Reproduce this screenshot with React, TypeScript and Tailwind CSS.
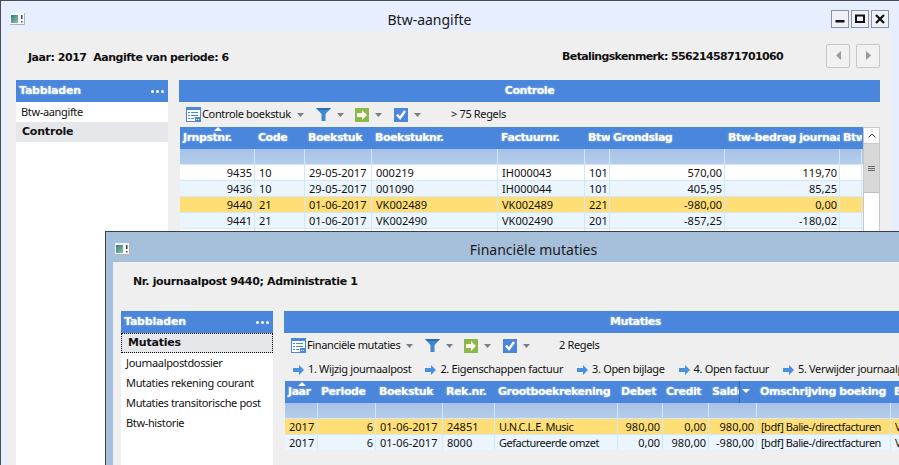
const font = "font-['Noto_Sans','DejaVu_Sans',sans-serif]";
const bold = "font-['DejaVu_Sans',sans-serif] font-bold text-[11px]";
const headShadow = "[text-shadow:0_0_2px_#b9d4f5]";

const WindowIcon = () => (
  <svg width="15" height="12" viewBox="0 0 15 12">
    <defs>
      <linearGradient id="winIcon" x1="0" y1="0" x2="1" y2="1">
        <stop offset="0" stopColor="#2f7d8a" />
        <stop offset="1" stopColor="#8fc0a8" />
      </linearGradient>
    </defs>
    <rect width="15" height="12" fill="#f7f7f7" />
    <path d="M14.500 0v11.500H0" fill="none" stroke="#b4b4b4" />
    <rect x="1" y="2" width="7" height="8" fill="url(#winIcon)" />
    <rect x="11" y="2" width="1.500" height="4" fill="#444" />
    <rect x="11" y="8" width="1.500" height="1.500" fill="#444" />
  </svg>
);

const TableIcon = () => (
  <svg width="15" height="15" viewBox="0 0 15 15" className="shrink-0">
    <rect x="0.5" y="0.5" width="14" height="14" fill="#fff" stroke="#4a86db" />
    <rect x="0" y="0" width="15" height="3" fill="#4a86db" />
    <path d="M2 5h2v1H2zM5 5h7v1H5zM2 8h2v1H2zM5 8h7v1H5zM2 11h2v1H2zM5 11h3v1H5z" fill="#4a86db" />
    <rect x="9" y="10" width="6" height="5" fill="#4a86db" />
    <path d="M10 12h1v1h-1zM12 12h1v1h-1z" fill="#fff" />
  </svg>
);

const Funnel = () => (
  <svg width="15" height="13" viewBox="0 0 15 13" className="shrink-0">
    <path d="M0 0h15L9.5 6v7h-4V6z" fill="#3f86d4" />
    <path d="M0 0h15l-2 2H2z" fill="#2a6cb5" />
  </svg>
);

const GreenArrow = () => (
  <svg width="14" height="14" viewBox="0 0 14 14" className="shrink-0">
    <rect width="14" height="14" fill="#8ab84a" />
    <path d="M2 5h5V2l5 5-5 5V9H2z" fill="#fdfbe6" />
  </svg>
);

const CheckBox = () => (
  <svg width="14" height="14" viewBox="0 0 14 14" className="shrink-0">
    <rect width="14" height="14" fill="#4a86db" />
    <path d="M3 6.500l3 3.500 5-7" fill="none" stroke="#fff" strokeWidth="2.400" />
  </svg>
);

const Caret = ({ className }: { className: string }) => (
  <svg width="7" height="4" viewBox="0 0 7 4" className={`shrink-0 ${className}`}>
    <path d="M0 0h7L3.500 4z" fill="#7a7f86" />
  </svg>
);

const BlueArrow = () => (
  <svg width="11" height="10" viewBox="0 0 11 10" className="shrink-0">
    <path d="M0 3h6V0l5 5-5 5V7H0z" fill="#4a90e2" />
  </svg>
);

const WinButton = ({ kind }: { kind: "min" | "max" | "close" }) => (
  <div className="flex h-[18px] w-[18px] items-center justify-center border border-[#8d939b] bg-[#eef1f7]">
    <svg width="10" height="10" viewBox="0 0 10 10">
      {kind === "min" && <rect x="0.5" y="6" width="9" height="2.500" fill="#111" />}
      {kind === "max" && <rect x="1" y="1.500" width="8" height="6.500" fill="none" stroke="#111" strokeWidth="2" />}
      {kind === "close" && <path d="M1 1l8 8M9 1L1 9" stroke="#111" strokeWidth="2.200" />}
    </svg>
  </div>
);

const Dots = () => (
  <div className="flex gap-[2px]">
    <span className="h-[3px] w-[3px] rounded-full bg-white" />
    <span className="h-[3px] w-[3px] rounded-full bg-white" />
    <span className="h-[3px] w-[3px] rounded-full bg-white" />
  </div>
);

const Sidebar = ({ items, active, focus }: { items: string[]; active: string; focus?: boolean }) => (
  <div className="flex w-[152px] shrink-0 flex-col bg-white">
    <div className={`flex h-[22px] items-center justify-between bg-[#4a86db] pl-[3px] pr-[4px] tracking-[-0.2px] text-white ${bold} ${headShadow}`}>
      <span>Tabbladen</span>
      <Dots />
    </div>
    {items.map((item) =>
      item === active ? (
        <div
          key={item}
          className={`flex h-[20px] items-center bg-[#e6e7ea] pl-[6px] tracking-[-0.2px] text-[#111] ${bold} ${focus ? "border border-dotted border-black" : ""}`}
        >
          {item}
        </div>
      ) : (
        <div key={item} className="flex h-[20px] items-center pl-[5px] text-[11px] tracking-[-0.35px] text-[#111]">
          {item}
        </div>
      )
    )}
  </div>
);

const Toolbar = ({ label, labelClass, count, countClass }: { label: string; labelClass: string; count: string; countClass: string }) => (
  <div className="flex h-[25px] items-center pl-[7px] text-[11px] tracking-[-0.35px] text-[#111]">
    <TableIcon />
    <span className={`ml-[1px] whitespace-nowrap ${labelClass}`}>{label}</span>
    <Caret className="ml-[7px]" />
    <div className="ml-[12px]"><Funnel /></div>
    <Caret className="ml-[6px]" />
    <div className="ml-[11px]"><GreenArrow /></div>
    <Caret className="ml-[6px]" />
    <div className="ml-[12px]"><CheckBox /></div>
    <Caret className="ml-[6px]" />
    <span className={`whitespace-nowrap ${countClass}`}>{count}</span>
  </div>
);

type Cell = { text: string; right?: boolean };

const Grid = ({ cols, heads, rows, selected }: { cols: string; heads: string[]; rows: Cell[][]; selected: number }) => (
  <div className="min-w-0 flex-1 overflow-hidden">
    <div className={`grid h-[22px] bg-[#4a86db] ${cols}`}>
      {heads.map((h, i) => (
        <div
          key={i}
          className={`flex items-center overflow-hidden whitespace-nowrap pl-[3px] tracking-[-0.45px] text-white ${bold} ${headShadow}`}
        >
          {h}
        </div>
      ))}
    </div>
    <div className={`grid h-[15px] bg-gradient-to-b from-[#a6c2e6] to-[#b4cdec] ${cols}`}>
      {heads.map((_, i) => (
        <div key={i} className="border-r border-[#d3e6fa]" />
      ))}
    </div>
    {rows.map((row, r) => (
      <div
        key={r}
        className={`grid h-[16px] border-t border-[#d3e6fa] ${cols} ${
          r === selected ? "bg-[#ffdf75]" : r % 2 === 0 ? "bg-white" : "bg-[#eaf5fe]"
        }`}
      >
        {row.map((c, i) => (
          <div
            key={i}
            className={`flex items-center overflow-hidden whitespace-nowrap border-r border-[#d3e6fa] pl-[4px] pr-[2px] text-[11px] leading-none text-[#111] ${
              c.right ? "justify-end" : ""
            } ${/[a-z]/.test(c.text) ? "tracking-[-0.5px]" : ""}`}
          >
            {c.text}
          </div>
        ))}
      </div>
    ))}
  </div>
);

const t = (text: string): Cell => ({ text });
const n = (text: string): Cell => ({ text, right: true });

const outerRows: Cell[][] = [
  [n("9435"), t("10"), t("29-05-2017"), t("000219"), t("IH000043"), t("101"), n("570,00"), n("119,70"), t("")],
  [n("9436"), t("10"), t("29-05-2017"), t("001090"), t("IH000044"), t("101"), n("405,95"), n("85,25"), t("")],
  [n("9440"), t("21"), t("01-06-2017"), t("VK002489"), t("VK002489"), t("221"), n("-980,00"), n("0,00"), t("")],
  [n("9441"), t("21"), t("01-06-2017"), t("VK002490"), t("VK002490"), t("201"), n("-857,25"), n("-180,02"), t("")],
  [n(""), t(""), t(""), t(""), t(""), t(""), n(""), n(""), t("")],
];

const innerRows: Cell[][] = [
  [t("2017"), n("6"), t("01-06-2017"), t("24851"), t("U.N.C.L.E. Music"), n("980,00"), n("0,00"), n("980,00"), t("[bdf] Balie-/directfacturen"), t("V")],
  [t("2017"), n("6"), t("01-06-2017"), t("8000"), t("Gefactureerde omzet"), n("0,00"), n("980,00"), n("-980,00"), t("[bdf] Balie-/directfacturen"), t("V")],
];

const actions = ["1. Wijzig journaalpost", "2. Eigenschappen factuur", "3. Open bijlage", "4. Open factuur", "5. Verwijder journaalpost"];

export default function App() {
  return (
    <div className={`relative h-[465px] w-[899px] overflow-hidden bg-white ${font}`}>
      {/* achterste venster */}
      <div className="absolute inset-0 flex flex-col border-l border-t border-[#4a4d52] bg-[#e6eeff]">
        <div className="relative flex h-[30px] shrink-0 items-center justify-center pr-[41px] pt-[6px] text-[14px] text-[#1a1a1a]">
          <div className="absolute left-[9px] top-[12px]"><WindowIcon /></div>
          Btw-aangifte
          <div className="absolute right-[10px] top-[9px] flex gap-[2px]">
            <WinButton kind="min" />
            <WinButton kind="max" />
            <WinButton kind="close" />
          </div>
        </div>
        <div className="ml-[7px] mr-[8px] flex-1 bg-[#efefef] pl-[8px] pr-[11px]">
          <div className={`flex h-[49px] items-center text-[#111] ${bold}`}>
            <span className="ml-[12px] mt-[5px] whitespace-nowrap tracking-[-0.47px]">Jaar: 2017&nbsp; Aangifte van periode: 6</span>
            <span className="ml-auto mt-[4px] whitespace-nowrap tracking-[-0.65px]">Betalingskenmerk: 5562145871701060</span>
            <div className="ml-[43px] flex gap-[6px]">
              <div className="flex h-[24px] w-[24px] items-center justify-center rounded-[2px] border border-[#c6c6c6] bg-[#f1f1f1]">
                <svg width="5" height="9" viewBox="0 0 5 9"><path d="M5 0v9L0 4.500z" fill="#9a9a9a" /></svg>
              </div>
              <div className="flex h-[24px] w-[24px] items-center justify-center rounded-[2px] border border-[#c6c6c6] bg-[#f1f1f1]">
                <svg width="5" height="9" viewBox="0 0 5 9"><path d="M0 0v9l5-4.500z" fill="#9a9a9a" /></svg>
              </div>
            </div>
          </div>
          <div className="flex gap-[11px]">
            <div className="flex h-[400px]">
              <Sidebar items={["Btw-aangifte", "Controle"]} active="Controle" />
            </div>
            <div className="min-w-0 flex-1">
              <div className={`flex h-[22px] items-center justify-center bg-[#4a86db] tracking-[-0.45px] text-white ${bold} ${headShadow}`}>Controle</div>
              <Toolbar label="Controle boekstuk" labelClass="w-[88px]" count="> 75 Regels" countClass="ml-[30px]" />
              <div className="relative ml-[1px] flex">
                <div className="pointer-events-none absolute left-[34px] top-0 h-0 w-0 border-x-[4px] border-b-[4px] border-x-transparent border-b-white" />
                <Grid
                  cols="grid-cols-[75px_50px_67px_126px_87px_25px_115px_115px_22px]"
                  heads={["Jrnpstnr.", "Code", "Boekstuk", "Boekstuknr.", "Factuurnr.", "Btw", "Grondslag", "Btw-bedrag journaal", "Btw"]}
                  rows={outerRows}
                  selected={2}
                />
                <div className="flex w-[17px] shrink-0 flex-col border border-[#c8c8c8] bg-white">
                  <div className="flex h-[16px] items-center justify-center border-b border-[#c8c8c8]">
                    <svg width="8" height="5" viewBox="0 0 8 5"><path d="M0.500 4.500L4 1l3.500 3.500" fill="none" stroke="#444" /></svg>
                  </div>
                  <div className="flex h-[49px] flex-col items-center justify-center gap-[1px] border-b border-[#bdbdbd] bg-[#d8d8d8]">
                    <span className="h-px w-[7px] bg-[#666]" />
                    <span className="h-px w-[7px] bg-[#666]" />
                    <span className="h-px w-[7px] bg-[#666]" />
                  </div>
                </div>
              </div>
            </div>
          </div>
        </div>
      </div>

      {/* voorste venster */}
      <div className="absolute left-[105px] top-[231px] flex h-[234px] w-[882px] flex-col border-l border-t border-[#3c4046] bg-[#a6c0dc]">
        <div className="relative flex h-[30px] shrink-0 items-center justify-center pr-[26px] pt-[4px] text-[14px] text-[#1a1a1a]">
          <div className="absolute left-[9px] top-[11px]"><WindowIcon /></div>
          Financiële mutaties
        </div>
        <div className="ml-[7px] flex-1 overflow-hidden bg-[#efefef] pl-[8px]">
          <div className={`flex h-[49px] items-start pl-[12px] pt-[12px] tracking-[-0.35px] text-[#111] ${bold}`}>
            Nr. journaalpost 9440; Administratie 1
          </div>
          <div className="flex h-[200px] gap-[11px]">
            <Sidebar
              items={["Mutaties", "Journaalpostdossier", "Mutaties rekening courant", "Mutaties transitorische post", "Btw-historie"]}
              active="Mutaties"
              focus
            />
            <div className="min-w-0 flex-1">
              <div className={`flex h-[22px] items-center justify-center bg-[#4a86db] tracking-[-0.45px] text-white ${bold} ${headShadow}`}>Mutaties</div>
              <Toolbar label="Financiële mutaties" labelClass="w-[92px]" count="2 Regels" countClass="ml-[29px]" />
              <div className="flex h-[23px] items-center gap-[14px] pl-[9px] text-[11px] tracking-[-0.35px] text-[#111]">
                {actions.map((a) => (
                  <div key={a} className="flex items-center gap-[4px] whitespace-nowrap">
                    <BlueArrow />
                    {a}
                  </div>
                ))}
              </div>
              <div className="relative ml-[1px] bg-white">
                <div className="pointer-events-none absolute left-[13px] top-[1px] h-0 w-0 border-x-[4px] border-b-[4px] border-x-transparent border-b-white" />
                <div className="pointer-events-none absolute left-[454px] top-0 h-[22px] w-[18px] border-l border-[#2f6cc0] bg-[#4a86db]">
                  <div className="ml-[2px] mt-[8px] h-0 w-0 border-x-[4px] border-t-[4px] border-x-transparent border-t-white" />
                </div>
                <Grid
                  cols="grid-cols-[33px_58px_67px_52px_123px_45px_46px_48px_134px_90px]"
                  heads={["Jaar", "Periode", "Boekstuk", "Rek.nr.", "Grootboekrekening", "Debet", "Credit", "Saldo", "Omschrijving boeking", "B"]}
                  rows={innerRows}
                  selected={0}
                />
              </div>
            </div>
          </div>
        </div>
      </div>
    </div>
  );
}
